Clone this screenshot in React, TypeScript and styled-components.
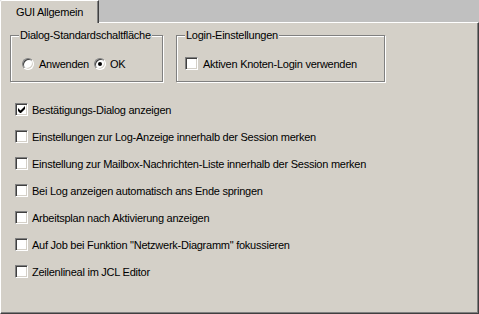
import React from "react";
import styled, { createGlobalStyle } from "styled-components";

const GlobalStyle = createGlobalStyle`
  html, body {
    margin: 0;
    padding: 0;
    background: #c0c0c0;
  }
  body {
    font-family: "Liberation Sans", Arial, sans-serif;
    font-size: 11px;
    letter-spacing: -0.25px;
    color: #000;
  }
`;

const Window = styled.div`
  width: 479px;
  height: 314px;
  display: flex;
  flex-direction: column;
  background: #c0c0c0;
`;

const TabStrip = styled.div`
  display: flex;
  height: 22px;
  flex-shrink: 0;
`;

const Tab = styled.div`
  position: relative;
  z-index: 1;
  box-sizing: border-box;
  width: 99px;
  height: 23px;
  padding: 5px 0 0 15px;
  background: #d4d0c8;
  border-left: 1px solid #fff;
  border-top: 1px solid #fff;
  border-right: 1px solid #404040;
  border-top-left-radius: 2px;
  box-shadow: inset -1px 0 0 #808080;
`;

const Panel = styled.div`
  box-sizing: border-box;
  height: 292px;
  background: #d4d0c8;
  border-left: 1px solid #fff;
  border-top: 1px solid #fff;
  border-right: 1px solid #404040;
  border-bottom: 1px solid #404040;
  box-shadow: inset -1px -1px 0 #808080;
  padding: 6px 0 0 9px;
`;

const GroupRow = styled.div`
  display: flex;
  gap: 13px;
`;

const Group = styled.fieldset<{ $width: number }>`
  box-sizing: border-box;
  width: ${(p) => p.$width}px;
  height: 53px;
  margin: 0;
  padding: 0;
  border: 1px solid #808080;
  box-shadow: inset 1px 1px 0 #fff, 1px 1px 0 #fff;
  display: flex;
  align-items: center;
`;

const Legend = styled.legend`
  margin-left: 8px;
  padding: 0 1px;
  background: #d4d0c8;
  line-height: 13px;
`;

const GroupBody = styled.div<{ $indent: number }>`
  display: flex;
  align-items: center;
  padding: 4px 0 0 ${(p) => p.$indent}px;
`;

const Option = styled.label<{ $gap: number }>`
  display: flex;
  align-items: center;
  gap: ${(p) => p.$gap}px;
  margin-right: 5px;
  white-space: nowrap;
`;

const Radio = styled.span<{ $on?: boolean }>`
  box-sizing: border-box;
  width: 12px;
  height: 12px;
  border-radius: 50%;
  background: #fff;
  border: 1px solid;
  border-color: #808080 #fff #fff #808080;
  box-shadow: inset 1px 1px 0 #404040, inset -1px -1px 0 #d4d0c8;
  display: flex;
  align-items: center;
  justify-content: center;
  &::after {
    content: "";
    width: 4px;
    height: 4px;
    border-radius: 50%;
    background: ${(p) => (p.$on ? "#000" : "transparent")};
  }
`;

const Box = styled.span`
  box-sizing: border-box;
  flex-shrink: 0;
  width: 13px;
  height: 13px;
  background: #fff;
  border: 1px solid;
  border-color: #808080 #fff #fff #808080;
  box-shadow: inset 1px 1px 0 #404040, inset -1px -1px 0 #d4d0c8;
  display: flex;
  align-items: center;
  justify-content: center;
`;

const CheckList = styled.div`
  display: flex;
  flex-direction: column;
  margin: 14px 0 0 5px;
`;

const CheckRow = styled.label`
  display: flex;
  align-items: center;
  gap: 4px;
  height: 27px;
  white-space: nowrap;
`;

function CheckMark() {
  return (
    <svg width="7" height="7" viewBox="0 0 7 7">
      <path d="M0 2v3l2 2h1l4-4V0L2.5 4.5z" fill="#000" />
    </svg>
  );
}

function Check({ label, on }: { label: string; on?: boolean }) {
  return (
    <CheckRow>
      <Box>{on && <CheckMark />}</Box>
      {label}
    </CheckRow>
  );
}

const options = [
  { label: "Bestätigungs-Dialog anzeigen", on: true },
  { label: "Einstellungen zur Log-Anzeige innerhalb der Session merken" },
  { label: "Einstellung zur Mailbox-Nachrichten-Liste innerhalb der Session merken" },
  { label: "Bei Log anzeigen automatisch ans Ende springen" },
  { label: "Arbeitsplan nach Aktivierung anzeigen" },
  { label: 'Auf Job bei Funktion "Netzwerk-Diagramm" fokussieren' },
  { label: "Zeilenlineal im JCL Editor" },
];

export default function App() {
  return (
    <>
      <GlobalStyle />
      <Window>
        <TabStrip>
          <Tab>GUI Allgemein</Tab>
        </TabStrip>
        <Panel>
          <GroupRow>
            <Group $width={153}>
              <Legend>Dialog-Standardschaltfläche</Legend>
              <GroupBody $indent={11}>
                <Option $gap={5}>
                  <Radio />
                  Anwenden
                </Option>
                <Option $gap={4}>
                  <Radio $on />
                  OK
                </Option>
              </GroupBody>
            </Group>
            <Group $width={209}>
              <Legend>Login-Einstellungen</Legend>
              <GroupBody $indent={8}>
                <Option $gap={5}>
                  <Box />
                  Aktiven Knoten-Login verwenden
                </Option>
              </GroupBody>
            </Group>
          </GroupRow>
          <CheckList>
            {options.map((o) => (
              <Check key={o.label} label={o.label} on={o.on} />
            ))}
          </CheckList>
        </Panel>
      </Window>
    </>
  );
}
